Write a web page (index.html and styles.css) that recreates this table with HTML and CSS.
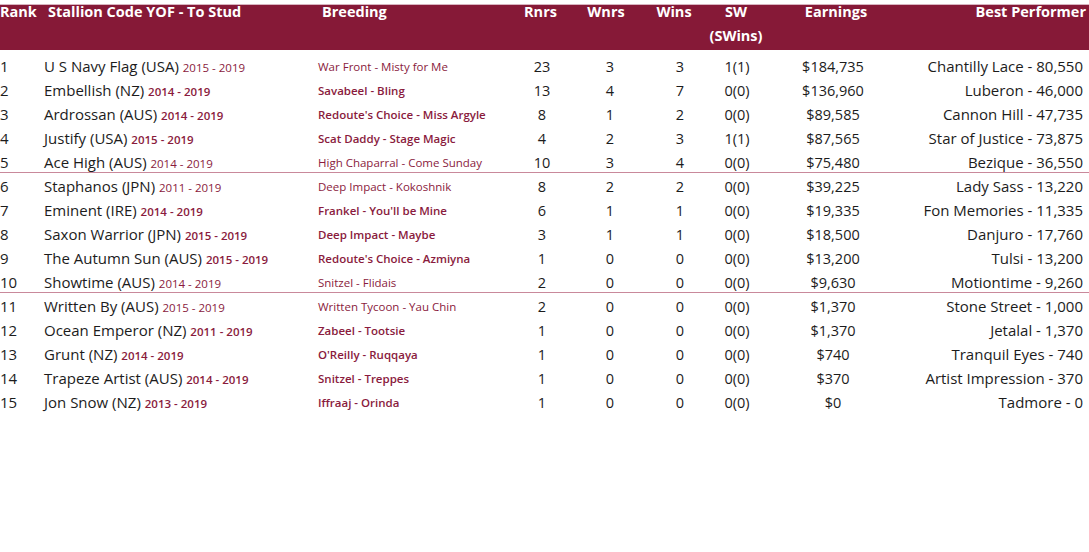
FILE: index.html
```html
<!DOCTYPE html>
<html>
<head>
<meta charset="utf-8">
<link rel="stylesheet" href="styles.css">
</head>
<body>
<div class="table">
  <div class="head">
    <div class="h h-rank">Rank</div>
    <div class="h h-stallion">Stallion Code YOF - To Stud</div>
    <div class="h h-breed">Breeding</div>
    <div class="h h-rnrs">Rnrs</div>
    <div class="h h-wnrs">Wnrs</div>
    <div class="h h-wins">Wins</div>
    <div class="h h-sw">SW<br>(SWins)</div>
    <div class="h h-earn">Earnings</div>
    <div class="h h-best">Best Performer</div>
  </div>
  <div class="rows">
    <div class="row"><div class="c t">1</div><div class="c t">U S Navy Flag (USA) <span class="yr lt">2015 - 2019</span></div><div class="c br lt">War Front - Misty for Me</div><div class="c n">23</div><div class="c n">3</div><div class="c n">3</div><div class="c n">1(1)</div><div class="c n">$184,735</div><div class="c r">Chantilly Lace - 80,550</div></div>
    <div class="row"><div class="c t">2</div><div class="c t">Embellish (NZ) <span class="yr sb">2014 - 2019</span></div><div class="c br sb">Savabeel - Bling</div><div class="c n">13</div><div class="c n">4</div><div class="c n">7</div><div class="c n">0(0)</div><div class="c n">$136,960</div><div class="c r">Luberon - 46,000</div></div>
    <div class="row"><div class="c t">3</div><div class="c t">Ardrossan (AUS) <span class="yr sb">2014 - 2019</span></div><div class="c br sb">Redoute's Choice - Miss Argyle</div><div class="c n">8</div><div class="c n">1</div><div class="c n">2</div><div class="c n">0(0)</div><div class="c n">$89,585</div><div class="c r">Cannon Hill - 47,735</div></div>
    <div class="row"><div class="c t">4</div><div class="c t">Justify (USA) <span class="yr sb">2015 - 2019</span></div><div class="c br sb">Scat Daddy - Stage Magic</div><div class="c n">4</div><div class="c n">2</div><div class="c n">3</div><div class="c n">1(1)</div><div class="c n">$87,565</div><div class="c r">Star of Justice - 73,875</div></div>
    <div class="row sep"><div class="c t">5</div><div class="c t">Ace High (AUS) <span class="yr lt">2014 - 2019</span></div><div class="c br lt">High Chaparral - Come Sunday</div><div class="c n">10</div><div class="c n">3</div><div class="c n">4</div><div class="c n">0(0)</div><div class="c n">$75,480</div><div class="c r">Bezique - 36,550</div></div>
    <div class="row"><div class="c t">6</div><div class="c t">Staphanos (JPN) <span class="yr lt">2011 - 2019</span></div><div class="c br lt">Deep Impact - Kokoshnik</div><div class="c n">8</div><div class="c n">2</div><div class="c n">2</div><div class="c n">0(0)</div><div class="c n">$39,225</div><div class="c r">Lady Sass - 13,220</div></div>
    <div class="row"><div class="c t">7</div><div class="c t">Eminent (IRE) <span class="yr sb">2014 - 2019</span></div><div class="c br sb">Frankel - You'll be Mine</div><div class="c n">6</div><div class="c n">1</div><div class="c n">1</div><div class="c n">0(0)</div><div class="c n">$19,335</div><div class="c r">Fon Memories - 11,335</div></div>
    <div class="row"><div class="c t">8</div><div class="c t">Saxon Warrior (JPN) <span class="yr sb">2015 - 2019</span></div><div class="c br sb">Deep Impact - Maybe</div><div class="c n">3</div><div class="c n">1</div><div class="c n">1</div><div class="c n">0(0)</div><div class="c n">$18,500</div><div class="c r">Danjuro - 17,760</div></div>
    <div class="row"><div class="c t">9</div><div class="c t">The Autumn Sun (AUS) <span class="yr sb">2015 - 2019</span></div><div class="c br sb">Redoute's Choice - Azmiyna</div><div class="c n">1</div><div class="c n">0</div><div class="c n">0</div><div class="c n">0(0)</div><div class="c n">$13,200</div><div class="c r">Tulsi - 13,200</div></div>
    <div class="row sep"><div class="c t">10</div><div class="c t">Showtime (AUS) <span class="yr lt">2014 - 2019</span></div><div class="c br lt">Snitzel - Flidais</div><div class="c n">2</div><div class="c n">0</div><div class="c n">0</div><div class="c n">0(0)</div><div class="c n">$9,630</div><div class="c r">Motiontime - 9,260</div></div>
    <div class="row"><div class="c t">11</div><div class="c t">Written By (AUS) <span class="yr lt">2015 - 2019</span></div><div class="c br lt">Written Tycoon - Yau Chin</div><div class="c n">2</div><div class="c n">0</div><div class="c n">0</div><div class="c n">0(0)</div><div class="c n">$1,370</div><div class="c r">Stone Street - 1,000</div></div>
    <div class="row"><div class="c t">12</div><div class="c t">Ocean Emperor (NZ) <span class="yr sb">2011 - 2019</span></div><div class="c br sb">Zabeel - Tootsie</div><div class="c n">1</div><div class="c n">0</div><div class="c n">0</div><div class="c n">0(0)</div><div class="c n">$1,370</div><div class="c r">Jetalal - 1,370</div></div>
    <div class="row"><div class="c t">13</div><div class="c t">Grunt (NZ) <span class="yr sb">2014 - 2019</span></div><div class="c br sb">O'Reilly - Ruqqaya</div><div class="c n">1</div><div class="c n">0</div><div class="c n">0</div><div class="c n">0(0)</div><div class="c n">$740</div><div class="c r">Tranquil Eyes - 740</div></div>
    <div class="row"><div class="c t">14</div><div class="c t">Trapeze Artist (AUS) <span class="yr sb">2014 - 2019</span></div><div class="c br sb">Snitzel - Treppes</div><div class="c n">1</div><div class="c n">0</div><div class="c n">0</div><div class="c n">0(0)</div><div class="c n">$370</div><div class="c r">Artist Impression - 370</div></div>
    <div class="row"><div class="c t">15</div><div class="c t">Jon Snow (NZ) <span class="yr sb">2013 - 2019</span></div><div class="c br sb">Iffraaj - Orinda</div><div class="c n">1</div><div class="c n">0</div><div class="c n">0</div><div class="c n">0(0)</div><div class="c n">$0</div><div class="c r">Tadmore - 0</div></div>
  </div>
</div>
</body>
</html>
```

FILE: styles.css
```css
html, body {
  margin: 0;
  padding: 0;
  background: #ffffff;
}
body {
  width: 1089px;
  height: 552px;
  overflow: hidden;
  font-family: "Open Sans", "Liberation Sans", sans-serif;
  color: #1c1c1c;
}
.table {
  width: 1089px;
}
.head,
.row {
  display: grid;
  grid-template-columns: 44px 274px 192px 64px 72px 68px 46px 146px 177px;
  padding-right: 6px;
}
.head {
  height: 50px;
  background: linear-gradient(to bottom, #ffffff 0, #ffffff 4px, #d8b4c0 4px, #d8b4c0 5px, #861937 5px);
  color: #ffffff;
  font-weight: 700;
  font-size: 14.5px;
  line-height: 24px;
}
.h {
  white-space: nowrap;
}
.h-rank { text-align: left; }
.h-stallion { padding-left: 4px; }
.h-breed { padding-left: 4px; }
.h-rnrs { text-align: center; padding-right: 3px; }
.h-wnrs { text-align: center; padding-right: 8px; }
.h-wins { text-align: center; padding-right: 12px; }
.h-sw { text-align: center; margin: 0 -10px 0 -12px; }
.h-earn { text-align: center; padding-left: 6px; }
.h-best { text-align: right; margin-right: -3px; }

.rows {
  padding-top: 5px;
}
.row {
  height: 24px;
  line-height: 24px;
  font-size: 14.5px;
}
.row.sep {
  background: linear-gradient(#c9899b, #c9899b) left bottom 2px / 100% 1px no-repeat;
}
.c {
  white-space: nowrap;
}
.t,
.r {
  font-size: 15px;
  line-height: 23px;
}
.n { text-align: center; }
.r { text-align: right; }
.yr {
  color: #8a1b3d;
  font-size: 11.5px;
  line-height: 1;
}
.br {
  color: #8a1b3d;
  font-size: 11.5px;
}
.lt { font-weight: 400; }
.sb { font-weight: 600; }
```
